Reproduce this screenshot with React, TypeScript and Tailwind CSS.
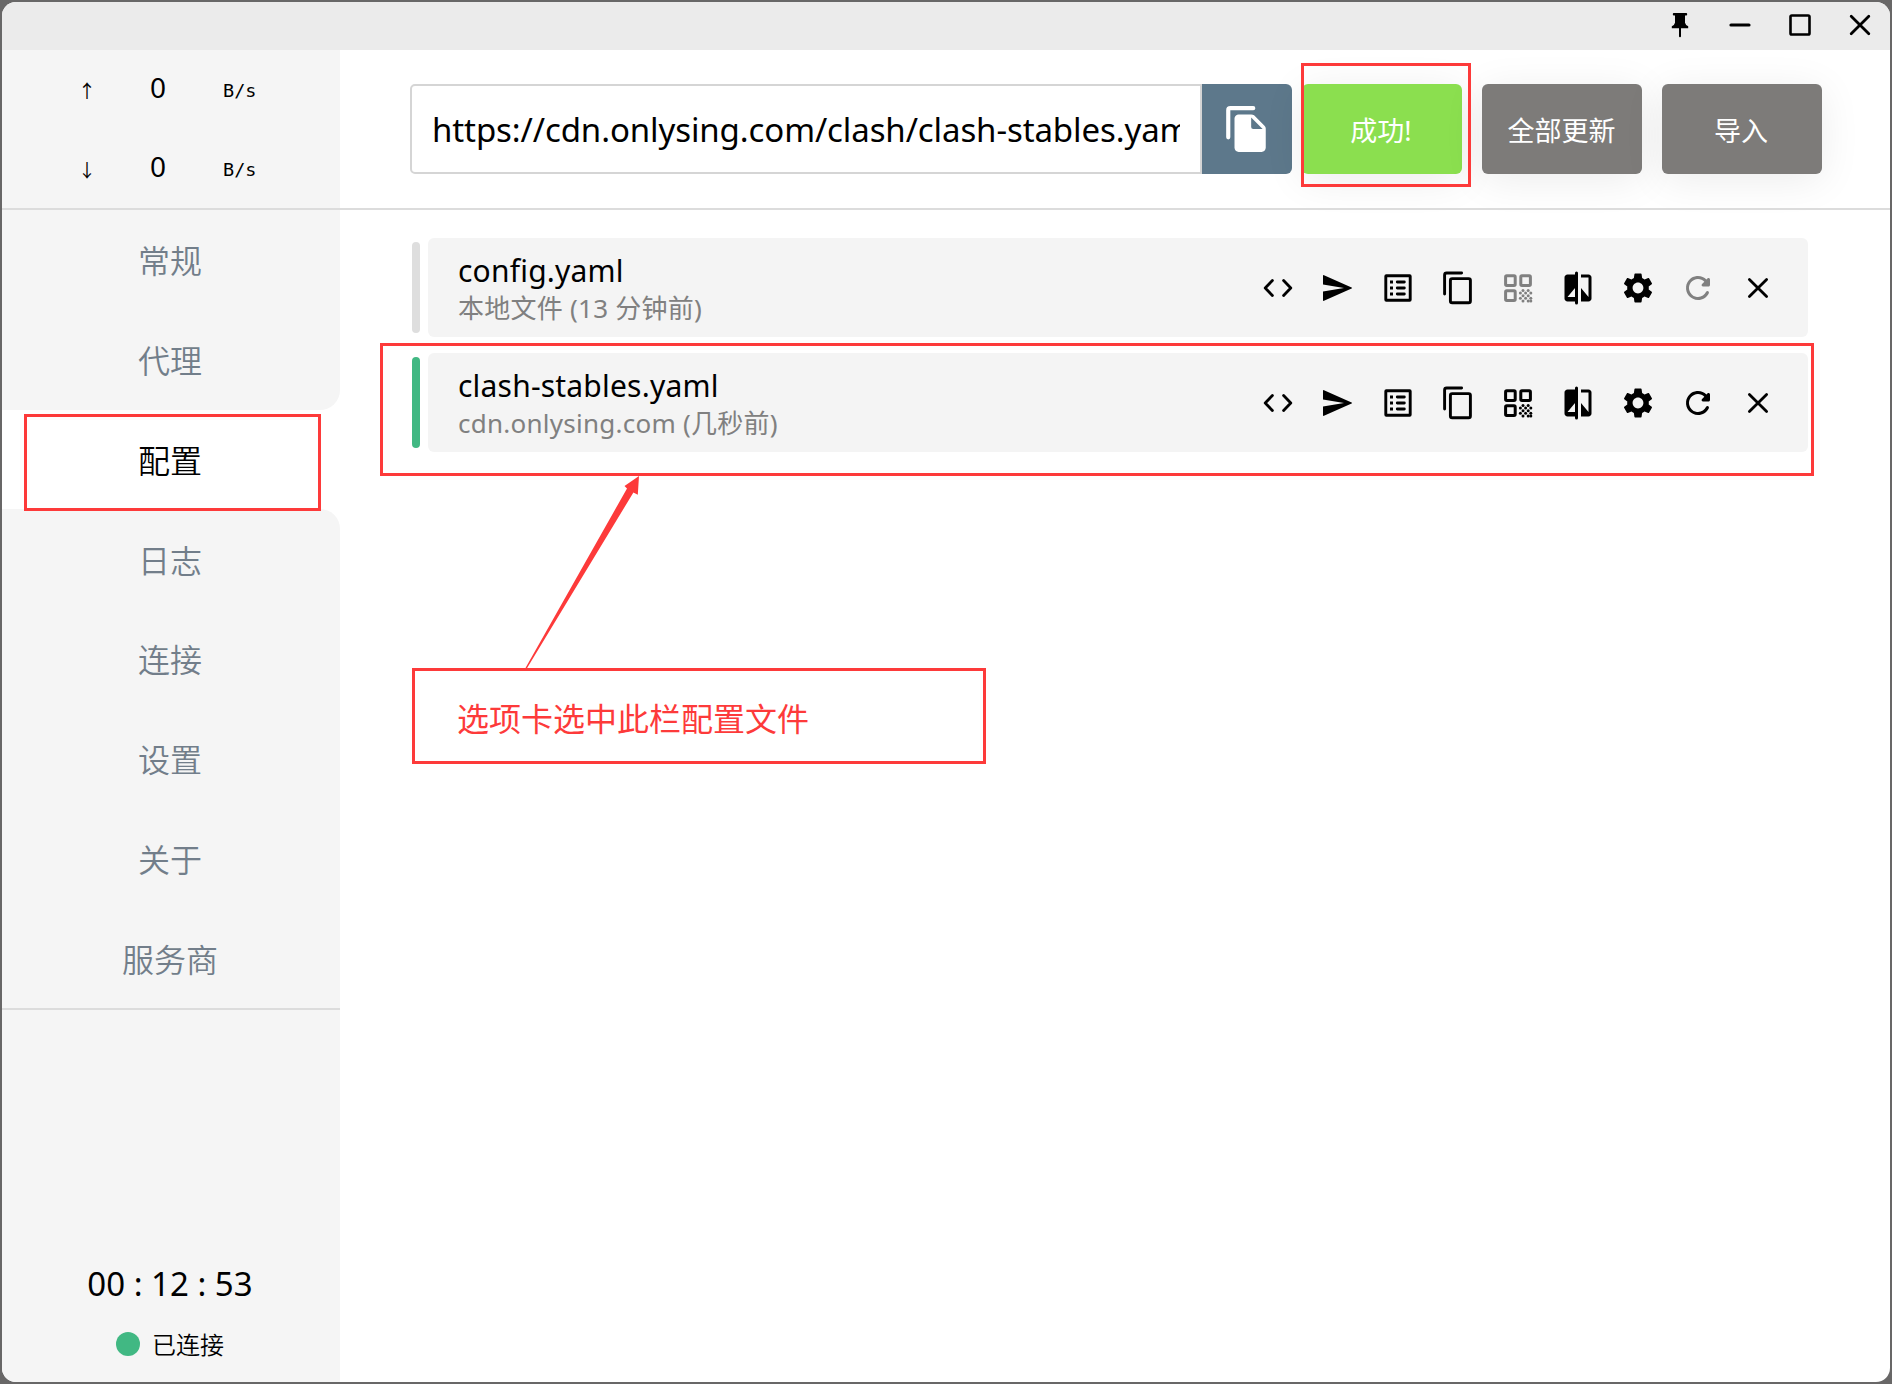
import type { ReactNode } from "react";
import { MdSettings } from "react-icons/md";

const speeds = ["↑", "↓"];
const nav = ["常规", "代理", "配置", "日志", "连接", "设置", "关于", "服务商"];

function navClass(n: string) {
  if (n === "配置") return "bg-white text-black";
  if (n === "代理") return "rounded-br-[20px] bg-[#f5f5f5] text-[#727e8a]";
  if (n === "日志") return "rounded-tr-[20px] bg-[#f5f5f5] text-[#727e8a]";
  return "bg-[#f5f5f5] text-[#727e8a]";
}

function Cell({ children, dim }: { children: ReactNode; dim?: boolean }) {
  return (
    <span className={dim ? "flex size-[60px] items-center justify-center text-[#808080]" : "flex size-[60px] items-center justify-center text-black"}>
      {children}
    </span>
  );
}

// Line drawing on a 36px square whose origin is its centre.
function Line({ children, w = 2.8 }: { children: ReactNode; w?: number }) {
  return (
    <svg width="36" height="36" viewBox="-18 -18 36 36" fill="none" stroke="currentColor" strokeWidth={w} strokeLinecap="round" strokeLinejoin="round">
      {children}
    </svg>
  );
}

const CodeIcon = () => <Line><path d="M-5.6-7.4-12.8 0l7.2 7.4M5.6-7.4 12.8 0 5.6 7.4" /></Line>;
const SendIcon = () => <Line><path fill="currentColor" stroke="none" d="M-15-12.2q0-1 1-.6L13.6-.6q1 .6 0 1.2L-14 12.8q-1 .4-1-.6V3.4L6 0-15-3.4Z" /></Line>;
const ListIcon = () => (
  <Line w={2.9}>
    <rect x="-12.2" y="-12.2" width="24.4" height="24.4" rx=".5" />
    <path strokeLinecap="butt" d="M-8-6h3M-8 0h3M-8 6h3" />
    <path d="M-.7-6h7M-.7 0h7M-.7 6h7" />
  </Line>
);
const CopyIcon = () => (
  <Line w={2.9}>
    <path d="M3.6-15h-15q-2 0-2 2V6" />
    <rect x="-7.6" y="-9.4" width="20" height="24.2" rx="1.8" />
  </Line>
);
const QrIcon = () => (
  <Line w={3}>
    <rect x="-12.4" y="-12.2" width="9.6" height="9.6" rx="1.2" />
    <rect x="2.8" y="-12.2" width="9.6" height="9.6" rx="1.2" />
    <rect x="-12.4" y="2.8" width="9.6" height="9.6" rx="1.2" />
    {[0, 1, 2, 3, 4].map((r) =>
      [0, 1, 2, 3, 4].filter((c) => (c + r) % 2 === 1 || (r === 4 && c === 4)).map((c) => (
        <circle key={`${r}-${c}`} cx={2.4 + c * 2.6} cy={2.5 + r * 2.6} r="1.5" fill="currentColor" stroke="none" />
      )),
    )}
  </Line>
);
const CompareIcon = () => (
  <svg width="36" height="36" viewBox="0 0 24 24" fill="currentColor">
    <path d="M10 3H5c-1.1 0-2 .9-2 2v14c0 1.1.9 2 2 2h5zM10 18H5l5-6zM19 3h-5v2h5v13l-5-6v9h5c1.1 0 2-.9 2-2V5c0-1.1-.9-2-2-2z" fillRule="evenodd" />
    <rect x="10" y="1" width="2" height="22" rx="1" />
  </svg>
);
const RefreshIcon = () => (
  <svg width="36" height="36" viewBox="0 0 24 24" fill="currentColor">
    <path d="M17.65 6.35c-1.63-1.63-3.94-2.57-6.48-2.31-3.67.37-6.69 3.35-7.1 7.02C3.52 15.91 7.27 20 12 20c3.19 0 5.93-1.87 7.21-4.56.32-.67-.16-1.44-.9-1.44-.37 0-.72.2-.88.53-1.13 2.43-3.84 3.97-6.8 3.31-2.22-.49-4.01-2.3-4.48-4.52C5.31 9.44 8.26 6 12 6c1.66 0 3.14.69 4.22 1.78l-1.51 1.51c-.63.63-.19 1.71.7 1.71H19c.55 0 1-.45 1-1V6.41c0-.89-1.08-1.34-1.71-.71l-.64.65z" />
  </svg>
);
const CloseIcon = () => <Line><path d="M-8.6-8.6 8.6 8.6M8.6-8.6-8.6 8.6" /></Line>;
const FilesIcon = () => (
  <svg width="50" height="50" viewBox="0 0 24 24" fill="currentColor">
    <path fill="none" stroke="currentColor" strokeWidth="2" strokeLinecap="round" d="M15 2H4q-1 0-1 1v13" />
    <path d="m15.4 5.4 5 5q.6.6.6 1.4V21c0 1.1-.9 2-2 2H8c-1.1 0-2-.9-2-2V7c0-1.1.9-2 2-2h6q.8 0 1.4.4zM14 6.5V11q0 1 1 1h4.5z" fillRule="evenodd" />
  </svg>
);

function Profile({ name, detail, active }: { name: string; detail: string; active?: boolean }) {
  return (
    <div className="flex h-[99px] items-center">
      <div className={active ? "h-[91px] w-2 rounded-[4px] bg-[#41b883]" : "h-[91px] w-2 rounded-[4px] bg-[#dedede]"} />
      <div className="ml-2 flex h-full w-[1380px] items-center justify-between rounded-[6px] bg-[#f4f4f4] pr-5 pl-[30px]">
        <div className="flex flex-col whitespace-nowrap">
          <span className="text-[30px] leading-[40px] tracking-[0.2px]">{name}</span>
          <span className="text-[26px] leading-[34px] tracking-[0.25px] text-[#808080]">{detail}</span>
        </div>
        <div className="flex">
          <Cell><CodeIcon /></Cell>
          <Cell><SendIcon /></Cell>
          <Cell><ListIcon /></Cell>
          <Cell><CopyIcon /></Cell>
          <Cell dim={!active}><QrIcon /></Cell>
          <Cell><CompareIcon /></Cell>
          <Cell><MdSettings size={36} /></Cell>
          <Cell dim={!active}><RefreshIcon /></Cell>
          <Cell><CloseIcon /></Cell>
        </div>
      </div>
    </div>
  );
}

export default function App() {
  return (
    <div className="relative h-[1384px] w-[1892px] overflow-hidden bg-[#686767] p-[2px] font-['Noto_Sans','Noto_Sans_CJK_SC',sans-serif] text-black">
      <div className="flex h-[1380px] w-[1888px] flex-col overflow-hidden rounded-[14px] bg-white">
        <div className="flex h-12 shrink-0 items-center justify-end bg-[#ebebeb] pb-[2px]">
          <Cell>
            <Line w={2}>
              <path fill="currentColor" stroke="none" d="M-6.2-12H6.2q1 0 1 1.2t-1 1.2H5v7.4Q5.6.4 8.2 1.2V3.2H-8.2V1.2Q-5.6.4-5-2.2V-9.6H-6.2q-1 0-1-1.2t1-1.2Z" />
              <path d="M0 3v8.2" />
            </Line>
          </Cell>
          <Cell><Line w={3.2}><path d="M-9 0H9" /></Line></Cell>
          <Cell><Line w={2.6}><rect x="-9.5" y="-9.5" width="19" height="19" rx="1.3" /></Line></Cell>
          <Cell><Line><path d="M-8.8-8.8 8.8 8.8M8.8-8.8-8.8 8.8" /></Line></Cell>
        </div>
        <div className="flex h-[158px] shrink-0">
          <div className="w-[338px] bg-[#f5f5f5]">
            {speeds.map((s) => (
              <div key={s} className="flex h-[79px] items-center">
                <span className="ml-[74px] w-[22px] pt-[2px] text-center font-['Noto_Sans_CJK_SC'] text-[18px]">{s}</span>
                <span className="ml-[49px] w-[22px] pb-[5px] text-center text-[28px]">0</span>
                <span className="ml-[54px] pt-[3px] font-['DejaVu_Sans_Mono'] text-[18.5px]">B/s</span>
              </div>
            ))}
          </div>
          <div className="flex w-[1550px] items-start pt-[34px] pl-[70px]">
            <div className="flex h-[90px] w-[792px] items-center rounded-l-[5px] border-2 border-[#d5d5d5] pt-[2px] pr-5 pl-5">
              <div className="w-full overflow-hidden text-[33px] tracking-[-0.1px] whitespace-nowrap">https://cdn.onlysing.com/clash/clash-stables.yaml</div>
            </div>
            <div className="flex h-[90px] w-[90px] items-center justify-center rounded-r-[6px] bg-[#5d788b] text-white">
              <FilesIcon />
            </div>
            <div className="ml-[10px] flex gap-5 text-[27px] text-white">
              <div className="flex h-[90px] w-[160px] items-center justify-center rounded-[6px] bg-[#8bdf4f] pt-[5px] pr-[2px] shadow-[0_6px_40px_rgba(0,0,0,0.08)]">成功!</div>
              <div className="flex h-[90px] w-[160px] items-center justify-center rounded-[6px] bg-[#7d7b79] pt-[5px] pr-[1px] shadow-[0_6px_40px_rgba(0,0,0,0.08)]">全部更新</div>
              <div className="flex h-[90px] w-[160px] items-center justify-center rounded-[6px] bg-[#7d7b79] pt-[5px] pr-[2px] shadow-[0_6px_40px_rgba(0,0,0,0.08)]">导入</div>
            </div>
          </div>
        </div>
        <div className="h-[2px] shrink-0 bg-[#dcdcdc]" />
        <div className="flex h-[1172px]">
          <div className="flex w-[338px] flex-col">
            {nav.map((n) => (
              <div key={n} className={`flex h-[99.75px] items-center justify-center pt-[3px] pr-[2px] text-[32px] font-[350] ${navClass(n)}`}>
                {n}
              </div>
            ))}
            <div className="h-[2px] bg-[#dcdcdc]" />
            <div className="flex flex-1 flex-col items-center justify-end bg-[#f5f5f5] pr-[2px] pb-5">
              <div className="text-[33px] leading-[48px]">00 : 12 : 53</div>
              <div className="mt-[18px] flex h-9 items-center gap-3 text-[24px]">
                <span className="size-6 rounded-full bg-[#41b883]" />
                <span className="pt-[2px] font-[350]">已连接</span>
              </div>
            </div>
          </div>
          <div className="flex flex-col gap-4 pt-7 pl-[72px]">
            <Profile name="config.yaml" detail="本地文件 (13 分钟前)" />
            <Profile active name="clash-stables.yaml" detail="cdn.onlysing.com (几秒前)" />
          </div>
        </div>
      </div>
      <div className="absolute top-[414px] left-[24px] h-[97px] w-[297px] border-3 border-[#fd3a3a]" />
      <div className="absolute top-[63px] left-[1301px] h-[124px] w-[170px] border-3 border-[#fd3a3a]" />
      <div className="absolute top-[343px] left-[380px] h-[133px] w-[1434px] border-3 border-[#fd3a3a]" />
      <svg className="absolute top-[476px] left-[520px]" width="124" height="193" viewBox="520 476 124 193">
        <path fill="#fd3a3a" d="M639 476 624.5 486 627 488.5 525.2 668.5H526.8L633.4 492.5 637.8 494.7Z" />
      </svg>
      <div className="absolute top-[668px] left-[412px] flex h-[96px] w-[574px] items-center border-3 border-[#fd3a3a] pt-[5px] pl-[42px] text-[32px] text-[#fd3a3a]">选项卡选中此栏配置文件</div>
    </div>
  );
}
